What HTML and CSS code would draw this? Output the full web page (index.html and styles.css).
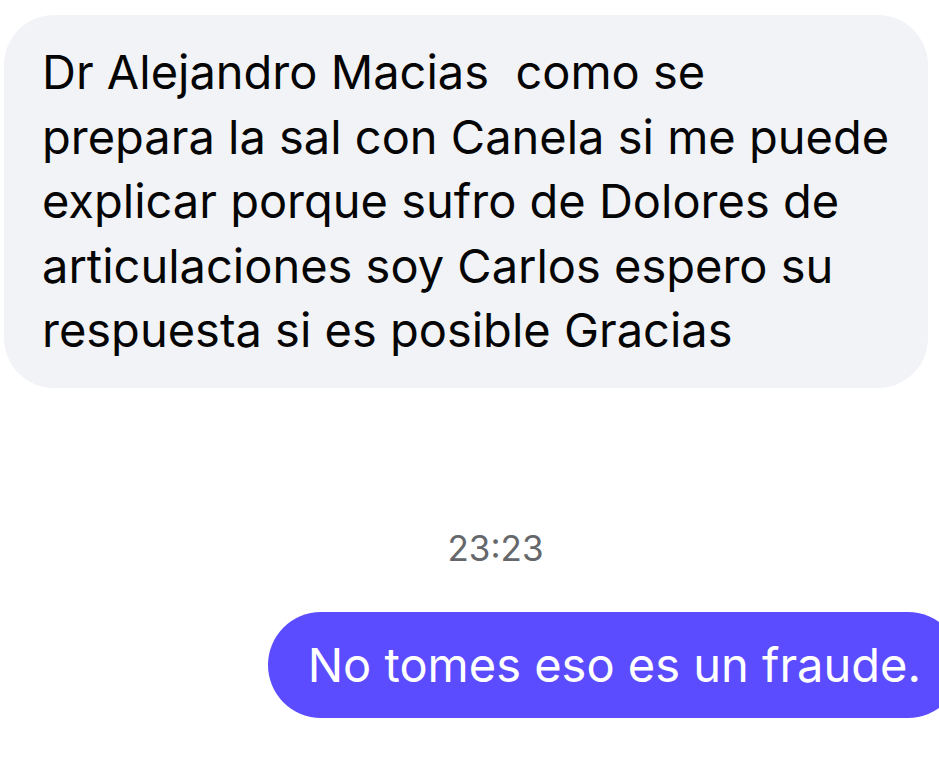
FILE: index.html
```html
<!DOCTYPE html>
<html lang="es">
<head>
  <meta charset="UTF-8" />
  <meta name="viewport" content="width=device-width, initial-scale=1.0" />
  <title>Chat</title>
  <link rel="stylesheet" href="styles.css">
</head>
<body>
  <div class="thread">
    <!-- Incoming message -->
    <div class="row row-in">
      <div class="bubble bubble-in">Dr Alejandro Macias  como se prepara la sal con Canela si me puede explicar porque sufro de Dolores de articulaciones soy Carlos espero su respuesta si es posible Gracias</div>
    </div>
    <div class="timestamp">23:23</div>
    <!-- Outgoing message -->
    <div class="row row-out">
      <div class="bubble bubble-out">No tomes eso es un fraude.</div>
    </div>
  </div>
</body>
</html>
```

FILE: styles.css
```css
* {
  margin: 0;
  padding: 0;
  box-sizing: border-box;
}
body {
  font-family: Inter, "Noto Sans", sans-serif;
  background: #fff;
  width: 939px;
  height: 771px;
  overflow: hidden;
}
.thread {
  display: flex;
  flex-direction: column;
  padding-top: 15px;
}
.row {
  display: flex;
}
.row-in {
  justify-content: flex-start;
  padding-left: 4px;
}
.row-out {
  justify-content: flex-end;
  margin-right: -22px;
}
.bubble {
  font-size: 47px;
  line-height: 64.5px;
  white-space: pre-wrap;
}
.bubble-in {
  width: 924px;
  padding: 25px 38px;
  background: #f2f3f6;
  color: #050505;
  border-radius: 50px;
}
.bubble-out {
  padding: 21px 40px;
  background: #5b4cff;
  color: #fff;
  border-radius: 54px;
}
.timestamp {
  margin: 140px 0 44px;
  padding-left: 52px;
  text-align: center;
  font-size: 35px;
  line-height: 40px;
  color: #65676b;
}
```
